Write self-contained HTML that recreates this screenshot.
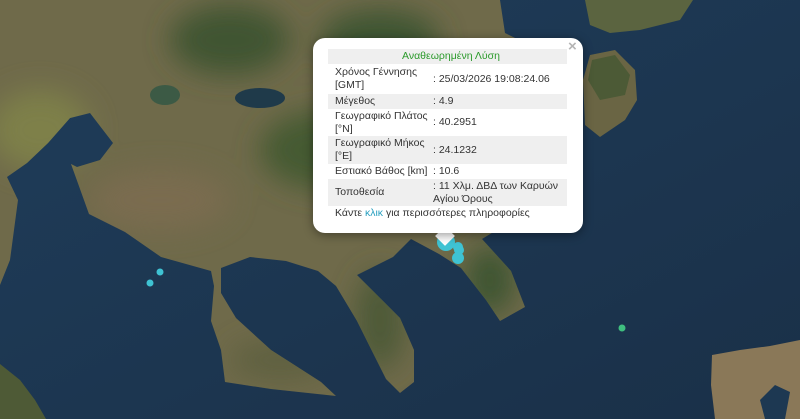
<!DOCTYPE html>
<html><head><meta charset="utf-8"><style>
html,body{margin:0;padding:0;width:800px;height:419px;overflow:hidden;background:#1d3852;font-family:"Liberation Sans","Noto Sans CJK SC",sans-serif}
#map{position:absolute;left:0;top:0}
.pop{position:absolute;left:313px;top:38px;width:270px;height:195px;background:#fff;border-radius:12px;box-shadow:0 2px 10px rgba(0,0,0,.4)}
.tip{position:absolute;left:438px;top:229px;width:14px;height:14px;background:#fff;transform:rotate(45deg)}
.x{position:absolute;left:568px;top:38px;color:#b5b5b5;font-size:15px;font-weight:bold}
table{position:absolute;left:328px;top:49px;width:239px;border-collapse:collapse;font-size:10.5px;color:#333;table-layout:fixed}
td{padding:0 0 0 7px;line-height:13px;vertical-align:middle;white-space:nowrap;overflow:hidden}
td+td{padding-left:3px}
tr.g{background:#efefef}
.h{text-align:center;color:#2b9a2b;height:15px}
.lnk{position:absolute;left:335px;top:207px;font-size:10.5px;color:#333}
.lnk span{color:#2aa0c0}
</style></head><body>
<svg id="map" width="800" height="419" viewBox="0 0 800 419">
<defs>
<filter id="b" x="-20%" y="-20%" width="140%" height="140%"><feGaussianBlur stdDeviation="14"/></filter>
<linearGradient id="sea" x1="0" y1="0" x2="1" y2="1"><stop offset="0" stop-color="#1f3d5a"/><stop offset="1" stop-color="#1a3048"/></linearGradient>
<clipPath id="lc"><path id="main" d="M0,0 L500,0 L505,33 L560,60 L575,100 L540,200 L500,228 L482,239 L511,271 L525,307 L500,321 L486,300 L461,268 L439,254 L411,239 L393,257 L357,275 L375,293 L400,318 L414,350 L414,382 L400,393 L386,379 L357,321 L336,286 L318,271 L286,261 L250,257 L221,268 L221,293 L236,318 L271,350 L321,382 L336,396 L271,389 L225,382 L221,350 L211,321 L214,286 L211,271 L161,257 L125,232 L89,214 L71,164 L77,167 L100,160 L113,143 L90,113 L70,118 L48,143 L27,163 L7,177 L18,200 L10,260 L0,285 Z"/></clipPath>
</defs>
<rect width="800" height="419" fill="url(#sea)"/>
<g clip-path="url(#lc)">
<rect width="800" height="419" fill="#6f6a4a"/>
<g filter="url(#b)">
<ellipse cx="40" cy="130" rx="50" ry="40" fill="#7e8048"/>
<ellipse cx="230" cy="40" rx="60" ry="35" fill="#3f5530"/>
<ellipse cx="330" cy="150" rx="70" ry="40" fill="#455a32"/>
<ellipse cx="380" cy="40" rx="60" ry="30" fill="#3e5430"/>
<ellipse cx="160" cy="200" rx="70" ry="30" fill="#7a6c50"/>
<ellipse cx="380" cy="320" rx="25" ry="50" fill="#4e5a38"/>
<ellipse cx="490" cy="280" rx="25" ry="35" fill="#3e5530"/>
<ellipse cx="280" cy="360" rx="50" ry="20" fill="#5f6040"/>
</g>
<ellipse cx="165" cy="95" rx="15" ry="10" fill="#3c5a45"/>
<ellipse cx="260" cy="98" rx="25" ry="10" fill="#1f3a4a"/>
</g>
<path d="M585,0 L693,0 L680,20 L640,30 L610,33 L590,25 Z" fill="#5b6440"/>
<path d="M590,55 L615,50 L635,70 L637,100 L625,120 L600,137 L585,125 L583,80 Z" fill="#6a6544"/>
<path d="M592,60 L615,55 L630,75 L625,95 L600,100 L588,80Z" fill="#4c5a36"/>
<path d="M712,355 L740,350 L770,346 L800,340 L800,419 L715,419 L711,385 Z" fill="#8a7858"/>
<path d="M760,400 L775,385 L790,392 L785,419 L765,419Z" fill="#1d3852"/>
<path d="M0,364 L20,380 L35,400 L46,419 L0,419 Z" fill="#4e5a36"/>
<g fill="#3fc3d3">
<circle cx="160" cy="272" r="3.5"/><circle cx="150" cy="283" r="3.5"/>
<circle cx="446" cy="242" r="9"/><circle cx="458" cy="247" r="5"/><circle cx="459" cy="250" r="5"/><circle cx="458" cy="258" r="6"/>
</g>
<circle cx="622" cy="328" r="3.5" fill="#3fbf7f"/>
</svg>
<div class="tip"></div>
<div class="pop"></div>
<div class="x">×</div>
<table>
<colgroup><col style="width:102px"><col style="width:137px"></colgroup>
<tr class="g"><td colspan="2" class="h">Αναθεωρημένη Λύση</td></tr>
<tr style="height:30px"><td>Χρόνος Γέννησης<br>[GMT]</td><td>: 25/03/2026 19:08:24.06</td></tr>
<tr class="g" style="height:15px"><td>Μέγεθος</td><td>: 4.9</td></tr>
<tr style="height:27px"><td>Γεωγραφικό Πλάτος<br>[°N]</td><td>: 40.2951</td></tr>
<tr class="g" style="height:28px"><td>Γεωγραφικό Μήκος<br>[°E]</td><td>: 24.1232</td></tr>
<tr style="height:15px"><td>Εστιακό Βάθος [km]</td><td>: 10.6</td></tr>
<tr class="g" style="height:27px"><td>Τοποθεσία</td><td>: 11 Χλμ. ΔΒΔ των Καρυών<br>Αγίου Όρους</td></tr>
</table>
<div class="lnk">Κάντε <span>κλικ</span> για περισσότερες πληροφορίες</div>
</body></html>
